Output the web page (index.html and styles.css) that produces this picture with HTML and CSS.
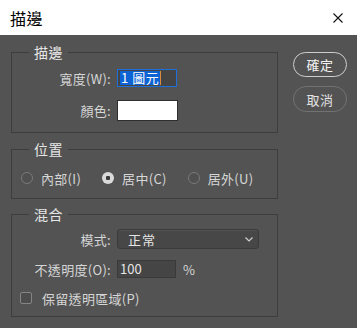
FILE: index.html
```html
<!DOCTYPE html>
<html lang="zh-Hant">

<head>
    <meta charset="UTF-8">
    <meta name="viewport" content="width=device-width, initial-scale=1.0">
    <title>描邊</title>
    <link rel="stylesheet" href="styles.css">
</head>

<body>
    <div class="titlebar">
        <span class="title">描邊</span>
        <svg class="close" width="10" height="10" viewBox="0 0 10 10">
            <path d="M0.5 0.5L9.5 9.5M9.5 0.5L0.5 9.5" stroke="#111" stroke-width="1.1" fill="none" />
        </svg>
    </div>

    <div class="dialog">
        <div class="main">
            <fieldset class="group group-stroke">
                <legend>描邊</legend>
                <div class="row row-width">
                    <label class="label">寬度(W):</label>
                    <div class="input input-active"><span class="sel">1 圖元</span><span class="caret"></span></div>
                </div>
                <div class="row row-color">
                    <label class="label">顏色:</label>
                    <div class="swatch"></div>
                </div>
            </fieldset>

            <fieldset class="group group-pos">
                <legend>位置</legend>
                <div class="radios">
                    <div class="radio-item"><span class="radio"></span><span>內部(I)</span></div>
                    <div class="radio-item"><span class="radio checked"></span><span>居中(C)</span></div>
                    <div class="radio-item"><span class="radio"></span><span>居外(U)</span></div>
                </div>
            </fieldset>

            <fieldset class="group group-blend">
                <legend>混合</legend>
                <div class="row row-mode">
                    <label class="label">模式:</label>
                    <div class="select">
                        <span>正常</span>
                        <svg width="8" height="5" viewBox="0 0 8 5">
                            <path d="M0.5 0.5L4 4L7.5 0.5" stroke="#cfcfcf" stroke-width="1.2" fill="none" />
                        </svg>
                    </div>
                </div>
                <div class="row row-opacity">
                    <label class="label">不透明度(O):</label>
                    <div class="input input-num">100</div>
                    <span class="unit">%</span>
                </div>
                <div class="check-row">
                    <span class="checkbox"></span>
                    <span>保留透明區域(P)</span>
                </div>
            </fieldset>
        </div>

        <div class="side">
            <button class="btn btn-ok">確定</button>
            <button class="btn btn-cancel">取消</button>
        </div>
    </div>
</body>

</html>
```

FILE: styles.css
```css
body {
    margin: 0;
    width: 357px;
    height: 328px;
    background-color: #535353;
    font-family: "Noto Sans CJK TC", "Noto Sans", sans-serif;
    font-size: 13px;
    color: #d6d6d6;
    overflow: hidden;
}

.titlebar {
    height: 35px;
    background-color: #ffffff;
    display: flex;
    align-items: center;
    justify-content: space-between;
    padding: 0 14px 0 10px;
}

.title {
    font-size: 16px;
    color: #000;
    letter-spacing: 0.5px;
}

.close {
    margin-top: 1px;
}

.dialog {
    display: flex;
    padding: 9px 10px 0 11px;
}

.main {
    width: 267px;
}

.group {
    margin: 0;
    padding: 0;
    min-width: 0;
    border: 1px solid #3d3d3d;
}

.group legend {
    margin-left: 17px;
    padding: 0 5px;
    font-size: 14px;
    line-height: 16px;
    color: #e6e6e6;
    letter-spacing: 0.5px;
}

.group-pos {
    margin-top: 8px;
    padding-bottom: 12px;
}

.group-blend {
    margin-top: 7px;
    padding-bottom: 10px;
}

.group-stroke {
    padding-bottom: 11px;
}

.row {
    display: flex;
    align-items: center;
}

.label {
    width: 99px;
    margin-right: 6px;
    text-align: right;
    letter-spacing: 0.3px;
    white-space: nowrap;
}

.row-width {
    margin-top: 9px;
    height: 18px;
}

.row-color {
    margin-top: 13px;
    height: 21px;
}

.input {
    box-sizing: border-box;
    height: 18px;
    width: 60px;
    background-color: #454545;
    border: 1px solid #3a3a3a;
    display: flex;
    align-items: center;
    padding-left: 2px;
    line-height: 14px;
}

.input-active {
    border-color: #1f6fd8;
}

.sel {
    background-color: #0d63d4;
    color: #fff;
    padding: 0 1px;
    height: 14px;
    letter-spacing: 0.5px;
}

.caret {
    width: 1px;
    height: 14px;
    background-color: #d98a3a;
}

.swatch {
    box-sizing: border-box;
    width: 61px;
    height: 21px;
    background-color: #fff;
    border: 1px solid #2e2e2e;
}

.radios {
    display: flex;
    align-items: center;
    gap: 21px;
    height: 16px;
    margin-top: 13px;
    padding-left: 9px;
}

.radio-item {
    display: flex;
    align-items: center;
    gap: 8px;
    letter-spacing: 0.3px;
}

.radio {
    box-sizing: border-box;
    width: 12px;
    height: 12px;
    border-radius: 50%;
    border: 1px solid #7a7a7a;
    background-color: #505050;
}

.radio.checked {
    border: none;
    background: radial-gradient(circle, #3a3a3a 0 2px, #dadada 2.5px);
}

.row-mode {
    margin-top: 7px;
    height: 20px;
}

.select {
    box-sizing: border-box;
    width: 142px;
    height: 20px;
    background-color: #474747;
    border: 1px solid #3b3b3b;
    border-radius: 3px;
    box-shadow: inset 0 1px 0 #525252;
    display: flex;
    align-items: center;
    justify-content: space-between;
    padding: 0 5px 0 10px;
    letter-spacing: 1px;
    color: #e6e6e6;
}

.row-opacity {
    margin-top: 11px;
    height: 18px;
}

.input-num {
    width: 59px;
    color: #e6e6e6;
}

.unit {
    margin-left: 7px;
}

.check-row {
    display: flex;
    align-items: center;
    gap: 10px;
    height: 16px;
    margin-top: 12px;
    padding-left: 8px;
    letter-spacing: 0.3px;
}

.checkbox {
    box-sizing: border-box;
    width: 12px;
    height: 12px;
    border: 1.5px solid #858585;
    border-radius: 2px;
    background-color: #4d4d4d;
}

.side {
    display: flex;
    flex-direction: column;
    gap: 9px;
    margin-left: 15px;
    margin-top: 8px;
}

.btn {
    box-sizing: border-box;
    width: 54px;
    height: 25px;
    border-radius: 13px;
    background-color: transparent;
    font-family: inherit;
    font-size: 13px;
    letter-spacing: 0.5px;
    padding: 0;
    cursor: pointer;
}

.btn-ok {
    border: 1.5px solid #cdcdcd;
    color: #f2f2f2;
}

.btn-cancel {
    height: 26px;
    border: 1px solid #727272;
    color: #e2e2e2;
}
```
